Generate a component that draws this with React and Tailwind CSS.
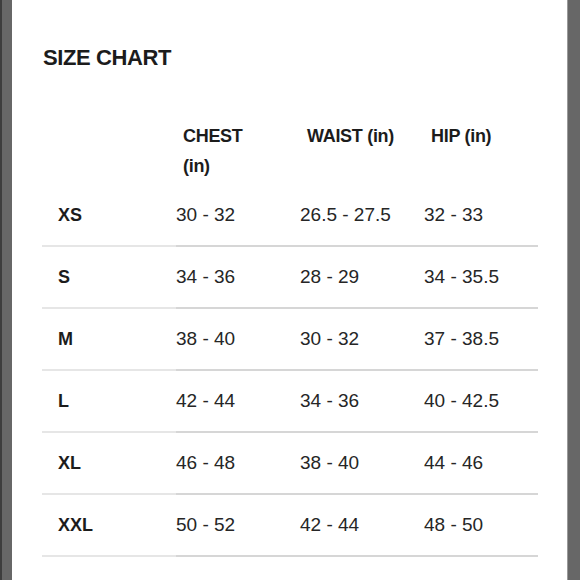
const headers = ["CHEST (in)", "WAIST (in)", "HIP (in)"];

const rows = [
  { size: "XS", chest: "30 - 32", waist: "26.5 - 27.5", hip: "32 - 33" },
  { size: "S", chest: "34 - 36", waist: "28 - 29", hip: "34 - 35.5" },
  { size: "M", chest: "38 - 40", waist: "30 - 32", hip: "37 - 38.5" },
  { size: "L", chest: "42 - 44", waist: "34 - 36", hip: "40 - 42.5" },
  { size: "XL", chest: "46 - 48", waist: "38 - 40", hip: "44 - 46" },
  { size: "XXL", chest: "50 - 52", waist: "42 - 44", hip: "48 - 50" },
  { size: "3XL", chest: "54 - 56", waist: "46 - 48", hip: "52 - 54" },
];

function SizeRow({ row }) {
  return (
    <div className="grid grid-cols-[134px_124px_124px_1fr]">
      <div className="h-[60px] box-content flex items-center pl-4 border-b-2 border-[#e6e6e6] text-[18px] font-bold text-[#1c1c1c]">
        {row.size}
      </div>
      <div className="h-[60px] box-content flex items-center border-b-2 border-[#d6d6d6] text-[19px] text-[#262626]">
        {row.chest}
      </div>
      <div className="h-[60px] box-content flex items-center border-b-2 border-[#d6d6d6] text-[19px] text-[#262626]">
        {row.waist}
      </div>
      <div className="h-[60px] box-content flex items-center border-b-2 border-[#d6d6d6] text-[19px] text-[#262626]">
        {row.hip}
      </div>
    </div>
  );
}

export default function App() {
  return (
    <div
      className="h-[580px] w-[580px] overflow-hidden flex bg-[#676767]"
      style={{ fontFamily: '"Liberation Sans", Arial, sans-serif' }}
    >
      <div className="w-[12px] shrink-0 border-l-2 border-[#3d3d3d]" />
      <div className="flex-1 bg-white border-r border-[#9a9a9a]">
        <h1 className="pt-[44px] pl-[31px] text-[22px] leading-[28px] font-bold tracking-[-0.4px] text-[#1c1c1c]">
          SIZE CHART
        </h1>

        <div className="mt-[49px] pl-[30px] pr-[29px]">
          <div className="grid grid-cols-[134px_124px_124px_1fr] pb-[4px] text-[18px] leading-[30px] font-bold tracking-[-0.3px] text-[#1c1c1c]">
            <div />
            <div className="pl-[7px] w-[80px]">{headers[0]}</div>
            <div className="pl-[7px]">{headers[1]}</div>
            <div className="pl-[7px]">{headers[2]}</div>
          </div>

          {rows.map((row) => (
            <SizeRow key={row.size} row={row} />
          ))}
        </div>
      </div>
      <div className="w-[12px] shrink-0" />
    </div>
  );
}
